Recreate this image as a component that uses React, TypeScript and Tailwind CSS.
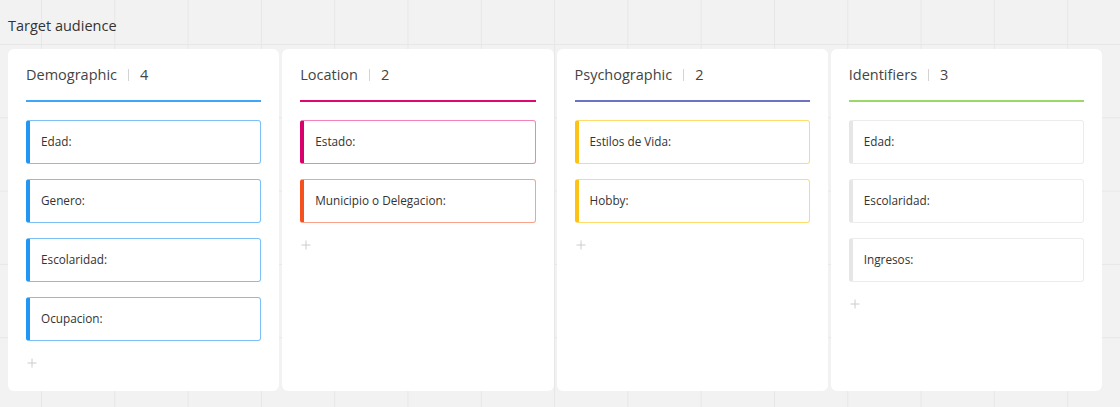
interface Item {
  label: string
  bar: string
  border: string
}

interface Column {
  title: string
  line: string
  items: Item[]
}

const columns: Column[] = [
  {
    title: 'Demographic',
    line: 'bg-[#42a5f5]',
    items: [
      { label: 'Edad:', bar: 'border-l-[#2196f3]', border: 'border-[#7cc0f6]' },
      { label: 'Genero:', bar: 'border-l-[#2196f3]', border: 'border-[#7cc0f6]' },
      { label: 'Escolaridad:', bar: 'border-l-[#2196f3]', border: 'border-[#7cc0f6]' },
      { label: 'Ocupacion:', bar: 'border-l-[#2196f3]', border: 'border-[#7cc0f6]' }
    ]
  },
  {
    title: 'Location',
    line: 'bg-[#e0086f]',
    items: [
      { label: 'Estado:', bar: 'border-l-[#d8006a]', border: 'border-[#f283b8]' },
      { label: 'Municipio o Delegacion:', bar: 'border-l-[#f4511e]', border: 'border-[#f8a28c]' }
    ]
  },
  {
    title: 'Psychographic',
    line: 'bg-[#6d72c3]',
    items: [
      { label: 'Estilos de Vida:', bar: 'border-l-[#fcc216]', border: 'border-[#fddc6c]' },
      { label: 'Hobby:', bar: 'border-l-[#fcc216]', border: 'border-[#fddc6c]' }
    ]
  },
  {
    title: 'Identifiers',
    line: 'bg-[#9ad86a]',
    items: [
      { label: 'Edad:', bar: 'border-l-[#e6e6e6]', border: 'border-[#ececec]' },
      { label: 'Escolaridad:', bar: 'border-l-[#e6e6e6]', border: 'border-[#ececec]' },
      { label: 'Ingresos:', bar: 'border-l-[#e6e6e6]', border: 'border-[#ececec]' }
    ]
  }
]

const PlusIcon = () => (
  <svg width="10" height="10" viewBox="0 0 10 10" fill="none" stroke="currentColor" strokeWidth="1">
    <path d="M5 0.5v9M0.5 5h9" />
  </svg>
)

const App = () => {
  return (
    <div className="h-[407px] w-full overflow-hidden bg-[#f2f2f2] bg-[linear-gradient(to_right,#e7e7e7_1px,transparent_1px),linear-gradient(to_bottom,#e7e7e7_1px,transparent_1px)] bg-[size:73.3px_73.3px] bg-[position:41px_44px] font-['Open_Sans','Noto_Sans',sans-serif]">
      {/* Título */}
      <h2 className="px-2 pt-[16px] text-[14.5px] leading-5 text-[#333]">Target audience</h2>

      {/* Columnas */}
      <div className="mt-[13px] ml-2 grid w-[1094px] grid-cols-4 gap-[3px]">
        {columns.map((col) => (
          <div key={col.title} className="h-[342px] rounded-md bg-white px-[18px] pt-[16px]">
            <div className="flex items-center text-[14.5px] leading-5 text-[#444]">
              <span>{col.title}</span>
              <span className="mx-[11px] h-[12px] w-px bg-[#d4d4d4]" />
              <span>{col.items.length}</span>
            </div>
            <div className={`mt-[15px] h-[2px] ${col.line}`} />

            <div className="mt-[18px] flex flex-col gap-[15px]">
              {col.items.map((item) => (
                <div
                  key={item.label}
                  className={`flex h-[44px] items-center rounded-[3px] border border-l-4 pl-[11px] text-[11.75px] text-[#333] ${item.border} ${item.bar}`}
                >
                  {item.label}
                </div>
              ))}
            </div>

            <button className="mt-[17px] ml-px block text-[#cccccc]">
              <PlusIcon />
            </button>
          </div>
        ))}
      </div>
    </div>
  )
}

export default App
